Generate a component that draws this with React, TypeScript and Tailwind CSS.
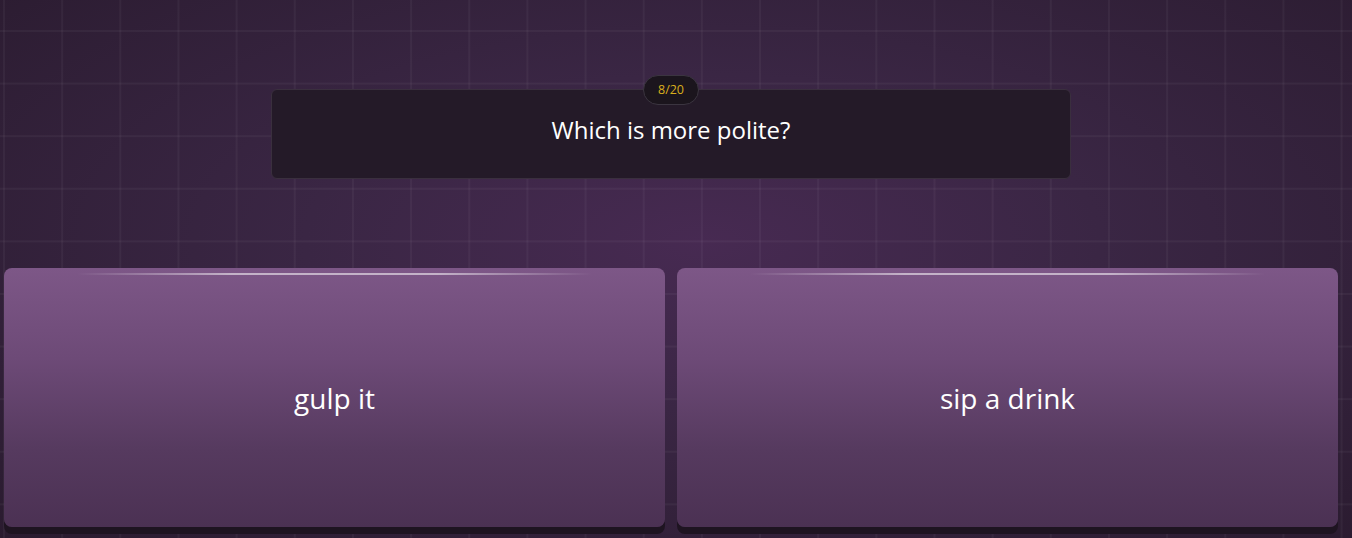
import React from "react";

export default function App() {
  return (
    <div
      className="relative w-[1352px] h-[538px] overflow-hidden bg-[radial-gradient(ellipse_at_52%_45%,#472a52_0%,#3a2644_40%,#2a1b2f_100%)]"
      style={{ fontFamily: "'Open Sans', 'Noto Sans', sans-serif" }}
    >
      <div className="absolute inset-0 bg-[linear-gradient(to_right,rgba(255,255,255,0.04)_1.5px,transparent_1.5px),linear-gradient(to_bottom,rgba(255,255,255,0.04)_1.5px,transparent_1.5px)] bg-[length:58.17px_52.6px] bg-[position:3px_30px]" />
      <div className="relative flex flex-col items-center pl-[4px] pr-[14px]">
        <div className="h-[89px]" />
        <div className="relative w-[800px] h-[90px] rounded-[6px] bg-[#241a28] border border-[#3a2f3e] flex items-center justify-center pb-[8px]">
          <div className="absolute left-1/2 -translate-x-1/2 -top-[15px] h-[30px] w-[56px] rounded-full bg-[#1b151d] border border-[#3b3540] flex items-center justify-center text-[12.5px] text-[#d9ae1c]">
            8/20
          </div>
          <span className="text-[24px] text-white leading-none">Which is more polite?</span>
        </div>
        <div className="h-[89px]" />
        <div className="w-full grid grid-cols-2 gap-[12px]">
          {["gulp it", "sip a drink"].map((t) => (
            <div
              key={t}
              className="relative h-[259px] rounded-[8px] bg-[linear-gradient(to_bottom,#7d5787_0%,#6d4a77_35%,#563a5f_70%,#4b3153_100%)] shadow-[0_7px_0_#1e1421] flex items-center justify-center"
            >
              <div className="absolute top-[5px] left-[11%] right-[11%] h-[2px] bg-[linear-gradient(to_right,transparent,rgba(255,255,255,0.55)_30%,rgba(255,255,255,0.55)_70%,transparent)]" />
              <span className="text-[28px] text-white leading-none">{t}</span>
            </div>
          ))}
        </div>
      </div>
    </div>
  );
}
